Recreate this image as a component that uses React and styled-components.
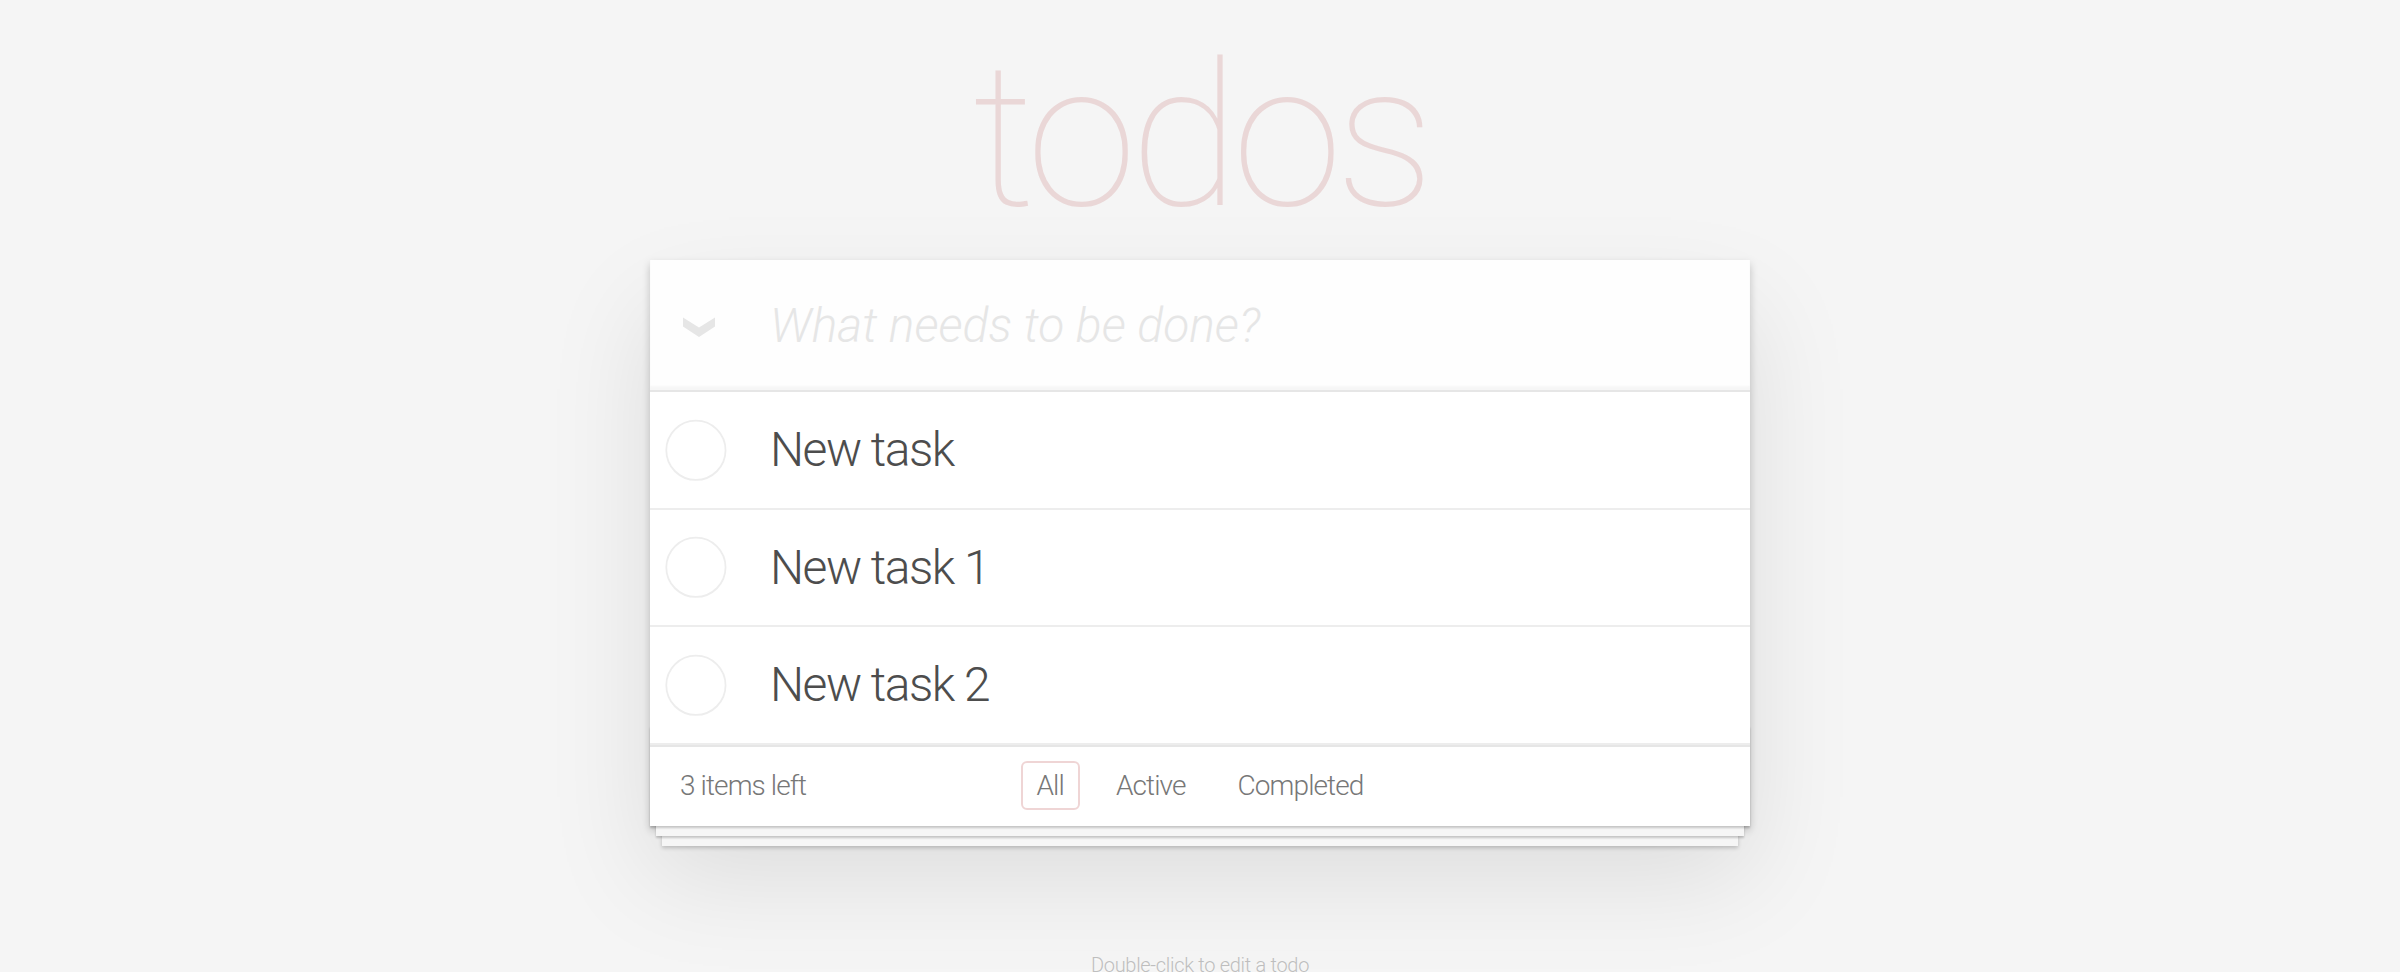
import React from "react";
import styled, { createGlobalStyle } from "styled-components";

const GlobalStyle = createGlobalStyle`
  html,
  body {
    margin: 0;
    padding: 0;
    overflow: hidden;
  }
  body {
    background: #f5f5f5;
    color: #4d4d4d;
    font-family: Roboto, "Liberation Sans", sans-serif;
    font-size: 28px;
    line-height: 1.4em;
    font-weight: 300;
    -webkit-font-smoothing: antialiased;
  }
`;

const Page = styled.div`
  min-width: 460px;
  max-width: 1100px;
  margin: 0 auto;
`;

const Title = styled.h1`
  margin: 0;
  padding-top: 37px;
  height: 260px;
  box-sizing: border-box;
  font-size: 200px;
  line-height: 200px;
  font-weight: 100;
  letter-spacing: -7px;
  text-align: center;
  color: rgba(175, 47, 47, 0.15);
  text-rendering: optimizeLegibility;
`;

const Card = styled.section`
  position: relative;
  background: #fff;
  box-shadow: 0 4px 8px 0 rgba(0, 0, 0, 0.2), 0 50px 100px 0 rgba(0, 0, 0, 0.1);
`;

const Header = styled.header`
  position: relative;
`;

const ToggleAll = styled.label`
  position: absolute;
  left: 33px;
  top: 57px;
  width: 32px;
  height: 20px;
  display: flex;
  svg {
    display: block;
  }
`;

const NewTodo = styled.input`
  display: block;
  width: 100%;
  height: 130px;
  box-sizing: border-box;
  margin: 0;
  padding: 0 32px 0 120px;
  border: none;
  outline: none;
  background: rgba(0, 0, 0, 0.003);
  box-shadow: inset 0 -4px 2px rgba(0, 0, 0, 0.03);
  font-family: inherit;
  font-size: 48px;
  font-weight: 300;
  color: #4d4d4d;
  &::placeholder {
    font-style: italic;
    font-weight: 300;
    color: #e6e6e6;
  }
`;

const Main = styled.section`
  position: relative;
  z-index: 2;
  border-top: 2px solid #e6e6e6;
`;

const TodoList = styled.ul`
  margin: 0;
  padding: 0;
  list-style: none;
`;

const TodoItem = styled.li`
  display: flex;
  align-items: center;
  font-size: 48px;
  border-bottom: 2px solid #ededed;
`;

const Check = styled.span`
  flex-shrink: 0;
  width: 80px;
  height: 80px;
  svg {
    display: block;
  }
`;

const Label = styled.label`
  flex: 1;
  display: block;
  padding: 29px 120px 29px 40px;
  line-height: 57.6px;
  letter-spacing: -1.5px;
  color: #4d4d4d;
  white-space: pre-line;
`;

const Footer = styled.footer`
  position: relative;
  display: grid;
  grid-template-columns: 1fr auto 1fr;
  align-items: center;
  height: 40px;
  padding: 14px 30px 25px;
  color: #777;
  letter-spacing: -0.9px;
  border-top: 2px solid #e6e6e6;
  &:before {
    content: "";
    position: absolute;
    right: 0;
    bottom: 0;
    left: 0;
    height: 100px;
    overflow: hidden;
    box-shadow: 0 2px 2px rgba(0, 0, 0, 0.2), 0 16px 0 -6px #f6f6f6,
      0 18px 2px -6px rgba(0, 0, 0, 0.2), 0 32px 0 -12px #f6f6f6,
      0 34px 4px -12px rgba(0, 0, 0, 0.2);
  }
`;

const Count = styled.span`
  text-align: left;
`;

const Filters = styled.ul`
  display: flex;
  gap: 8px;
  margin: 0;
  padding: 0;
  list-style: none;
`;

const FilterLink = styled.a`
  display: block;
  margin: 0 6px;
  padding: 6px 14px;
  line-height: 33px;
  color: inherit;
  text-decoration: none;
  border: 2px solid ${(p) => (p.$selected ? "rgba(175, 47, 47, 0.2)" : "transparent")};
  border-radius: 6px;
`;

const Info = styled.footer`
  margin: 129px auto 0;
  color: #bfbfbf;
  font-size: 20px;
  letter-spacing: -0.3px;
  text-shadow: 0 2px 0 rgba(255, 255, 255, 0.5);
  text-align: center;
  p {
    margin: 0;
    line-height: 1;
  }
`;

const todos = ["New task", "New task 1", "New task 2"];
const filters = ["All", "Active", "Completed"];

function Chevron() {
  return (
    <svg width="32" height="20" viewBox="0 0 32 20">
      <polygon points="0,0.5 16,10.5 32,0.5 32,9.5 16,20 0,9.5" fill="#e6e6e6" />
    </svg>
  );
}

function Circle() {
  return (
    <svg width="80" height="80" viewBox="-10 -18 100 135">
      <circle cx="50" cy="50" r="50" fill="none" stroke="#ededed" strokeWidth="3" />
    </svg>
  );
}

export default function App() {
  return (
    <>
      <GlobalStyle />
      <Page>
        <Title>todos</Title>
        <Card>
          <Header>
            <ToggleAll>
              <Chevron />
            </ToggleAll>
            <NewTodo placeholder="What needs to be done?" />
          </Header>
          <Main>
            <TodoList>
              {todos.map((t) => (
                <TodoItem key={t}>
                  <Check>
                    <Circle />
                  </Check>
                  <Label>{t}</Label>
                </TodoItem>
              ))}
            </TodoList>
          </Main>
          <Footer>
            <Count>3 items left</Count>
            <Filters>
              {filters.map((f) => (
                <li key={f}>
                  <FilterLink href="#/" $selected={f === "All"}>
                    {f}
                  </FilterLink>
                </li>
              ))}
            </Filters>
            <span />
          </Footer>
        </Card>
        <Info>
          <p>Double-click to edit a todo</p>
        </Info>
      </Page>
    </>
  );
}
